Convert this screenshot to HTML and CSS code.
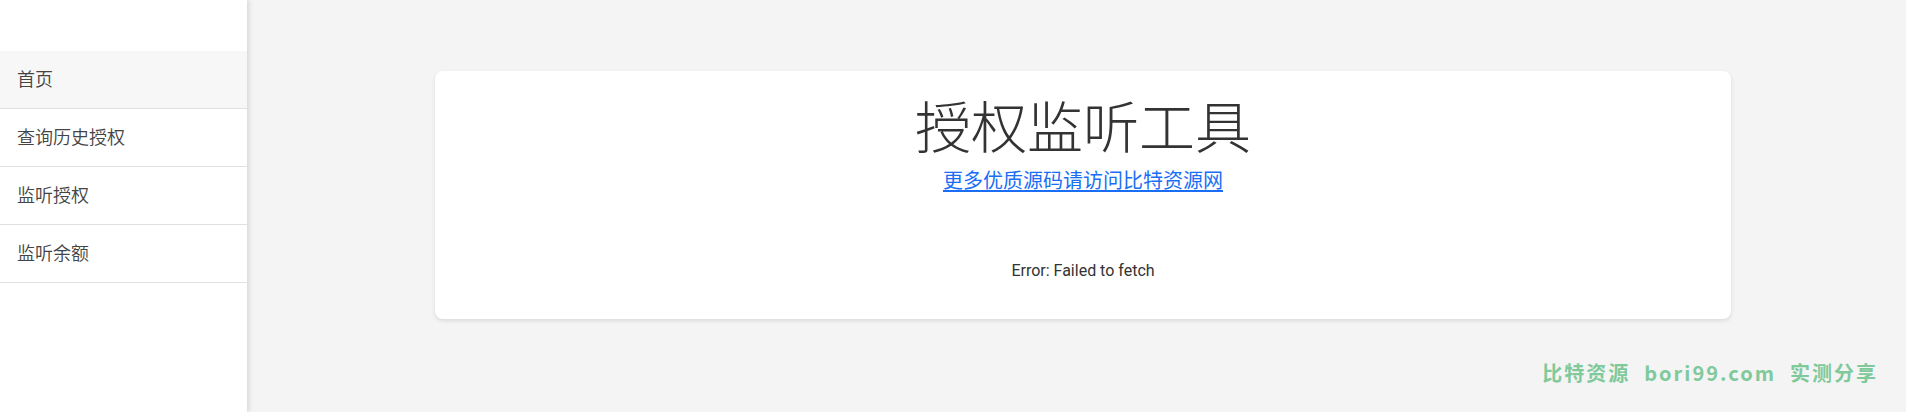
FILE: index.html
```html
<!DOCTYPE html>
<html lang="zh-CN">
<head>
<meta charset="utf-8">
<title>授权监听工具</title>
<link rel="stylesheet" href="styles.css">
</head>
<body>
<div class="layout">
  <aside class="sidebar">
    <nav class="menu">
      <a class="menu-item active" href="#">首页</a>
      <a class="menu-item" href="#">查询历史授权</a>
      <a class="menu-item" href="#">监听授权</a>
      <a class="menu-item" href="#">监听余额</a>
    </nav>
  </aside>
  <main class="main">
    <section class="card">
      <h1 class="title">授权监听工具</h1>
      <a class="promo" href="#">更多优质源码请访问比特资源网</a>
      <p class="error">Error: Failed to fetch</p>
    </section>
  </main>
</div>
<div class="watermark"><span>比特资源</span><span>bori99.com</span><span>实测分享</span></div>
</body>
</html>
```
FILE: styles.css
```css
html, body {
  margin: 0;
  padding: 0;
  height: 100%;
}
body {
  font-family: "Noto Sans CJK SC", "Noto Sans", sans-serif;
  background: #f4f4f4;
  color: #333;
  overflow: hidden;
}
.layout {
  display: flex;
  height: 412px;
}
.sidebar {
  width: 247px;
  flex: 0 0 247px;
  background: #fff;
  box-shadow: 2px 0 5px rgba(0, 0, 0, 0.12);
  padding-top: 51px;
  box-sizing: border-box;
  position: relative;
  z-index: 1;
}
.menu {
  display: flex;
  flex-direction: column;
}
.menu-item {
  display: flex;
  align-items: center;
  height: 57px;
  padding: 0 0 4px 17px;
  box-sizing: border-box;
  height: 58px;
  border-bottom: 1px solid #e0e0e0;
  font-size: 18px;
  font-weight: 350;
  color: #444;
  text-decoration: none;
}
.menu-item.active {
  background: #f7f7f7;
}
.main {
  flex: 1;
  background: #f4f4f4;
  padding: 71px 0 0 13px;
  box-sizing: border-box;
}
.card {
  width: 1296px;
  height: 248px;
  margin: 0 auto;
  background: #fff;
  border-radius: 8px;
  box-shadow: 0 2px 4px rgba(0, 0, 0, 0.1);
  box-sizing: border-box;
  padding-top: 25px;
  display: flex;
  flex-direction: column;
  align-items: center;
}
.title {
  margin: 0;
  font-size: 56px;
  line-height: 56px;
  font-weight: 300;
  color: #333;
}
.promo {
  margin-top: 18px;
  font-size: 20px;
  line-height: 20px;
  color: #1a6ef5;
  text-decoration: underline;
  text-underline-offset: 2px;
}
.error {
  margin: 71px 0 0;
  font-family: Roboto, "Noto Sans", sans-serif;
  font-size: 16px;
  line-height: 19px;
  color: #333;
}
.watermark {
  position: absolute;
  top: 362px;
  right: 28px;
  display: flex;
  gap: 14px;
  font-family: "Noto Sans CJK SC", sans-serif;
  font-weight: 700;
  font-size: 20px;
  line-height: 22px;
  letter-spacing: 2px;
  color: #80c99b;
}
```
